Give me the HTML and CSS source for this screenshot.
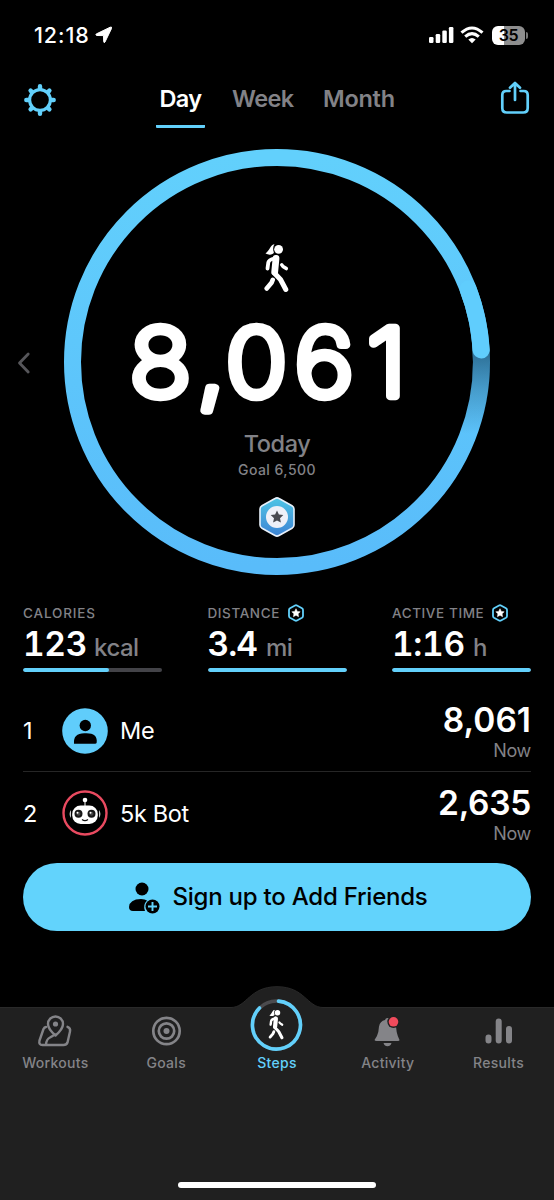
FILE: index.html
```html
<!DOCTYPE html>
<html lang="en">
<head>
<meta charset="utf-8">
<title>Steps</title>
<link rel="stylesheet" href="styles.css">
</head>
<body>
<svg class="defs" width="0" height="0">
  <defs>
    <symbol id="walker" viewBox="0 0 26 50">
      <g fill="none" stroke="currentColor" stroke-linecap="round" stroke-linejoin="round">
        <path d="M10.500 14.500Q5 15.500 4.300 18.500L3.500 24.500" stroke-width="3.800"/>
        <path d="M12 14.500 10.700 28" stroke-width="6.800"/>
        <path d="M10.300 29 16.500 35.500 21.800 45.500" stroke-width="5"/>
        <path d="M8.700 35.800 7.500 38.800 2.700 44.500" stroke-width="4.600"/>
        <path d="M17.700 20.800 19 22.500 22.300 24.600" stroke-width="3.500"/>
      </g>
      <circle cx="14.600" cy="5.300" r="4.400" fill="currentColor"/>
      <path d="M10.500.300C6.500.300 6.300 6 1.500 9.600 5 11.400 9 10.800 9.900 8.600 8.800 6 8.900 2.500 10.500.300Z" fill="currentColor"/>
    </symbol>
    <symbol id="badge" viewBox="0 0 18 18">
      <path d="M8 1.500Q9 1 10 1.500L15 4.300Q16 4.900 16 6V12Q16 13.100 15 13.700L10 16.500Q9 17 8 16.500L3 13.700Q2 13.100 2 12V6Q2 4.900 3 4.300Z" fill="none" stroke="#62d0fb" stroke-width="1.800"/>
      <path d="M9 4.700 10.300 7.400 13.200 7.800 11.100 9.800 11.600 12.700 9 11.300 6.400 12.700 6.900 9.800 4.800 7.800 7.700 7.400Z" fill="#fff" stroke="#fff" stroke-width=".5"/>
    </symbol>
  </defs>
</svg>

<div class="status">
  <span class="clock">12:18</span>
  <svg class="location" width="18" height="18" viewBox="0 0 18 18"><path d="M1.200 8 15.200 1.200Q17.200.500 16.500 2.500L10 16Q9.100 17.400 8.700 15.700L8.500 9.600 1.800 9.500Q.300 9.200 1.200 8Z" fill="#fff" stroke="#fff" stroke-linejoin="round"/></svg>
  <span class="spacer"></span>
  <svg width="26" height="18" viewBox="0 0 26 18" fill="#fff"><rect x="1" y="11" width="4.500" height="6" rx="1.200"/><rect x="7.700" y="8" width="4.500" height="9" rx="1.200"/><rect x="14.300" y="4.500" width="4.500" height="12.500" rx="1.200"/><rect x="20.900" y="1" width="4.500" height="16" rx="1.200"/></svg>
  <svg class="wifi" width="24" height="18" viewBox="0 0 24 18" fill="none" stroke="#fff" stroke-width="3.100"><path d="M1.500 6.700Q12-2.700 22.500 6.700"/><path d="M5.200 10.700Q12 4.700 18.800 10.700"/><path d="M12 17.200 8.300 13.500Q12 10.500 15.700 13.500Z" fill="#fff" stroke="none"/></svg>
  <span class="battery">35</span>
  <span class="nub"></span>
</div>

<header class="header">
  <svg class="gear" width="34" height="34" viewBox="-17 -17 34 34" stroke="#62d0fb" fill="none">
    <circle r="10.400" stroke-width="3.200"/>
    <path d="M0-12V-13.700M0 12V13.700M-12 0H-13.700M12 0H13.700M8.300-8.300 9.400-9.400M8.300 8.300 9.400 9.400M-8.300 8.300-9.400 9.400M-8.300-8.300-9.400-9.400" stroke-width="4.400" stroke-linecap="round"/>
  </svg>
  <nav class="tabs"><span class="tab active">Day</span><span class="tab week">Week</span><span class="tab month">Month</span></nav>
  <svg class="share" width="34" height="36" viewBox="0 0 34 36" fill="none" stroke="#62d0fb" stroke-width="2.700" stroke-linecap="round" stroke-linejoin="round"><path d="M11.500 11H8.300Q4.300 11 4.300 15V28Q4.300 32.500 8.800 32.500H25.200Q29.700 32.500 29.700 28V15Q29.700 11 25.700 11H22.500M17 20V3.500M12 7.700 17 3 22 7.700"/></svg>
</header>

<main>
  <section class="hero">
    <svg class="ring" width="426" height="426" viewBox="0 0 426 426">
      <defs>
        <linearGradient id="ringFill" x1="0" y1="0" x2="0" y2="1"><stop offset="0" stop-color="#62d0fc"/><stop offset="1" stop-color="#59bcfa"/></linearGradient>
        <linearGradient id="shade" gradientUnits="userSpaceOnUse" x1="0" y1="205" x2="0" y2="285"><stop offset="0" stop-color="#03233e" stop-opacity=".52"/><stop offset=".45" stop-color="#03233e" stop-opacity=".25"/><stop offset="1" stop-color="#03233e" stop-opacity="0"/></linearGradient>
      </defs>
      <circle cx="213" cy="213" r="204.500" fill="none" stroke="url(#ringFill)" stroke-width="17"/>
      <path d="M417.300 203A204.500 204.500 0 0 1 404 286" fill="none" stroke="url(#shade)" stroke-width="17.500"/>
      <path d="M404.070 140A204.500 204.500 0 0 1 417.150 201" fill="none" stroke="#60cdfd" stroke-width="17" stroke-linecap="round"/>
    </svg>
    <div class="hero-body">
      <svg class="hero-walker" width="26" height="50"><use href="#walker"/></svg>
      <svg class="count" width="300" height="110" viewBox="0 0 300 110"><text transform="scale(1.08 1)" x="2.500 65 91.500 155 222.500" y="84.500">8,061</text></svg>
      <div class="today">Today</div>
      <div class="goal">Goal 6,500</div>
      <svg class="medal" width="38" height="42" viewBox="0 0 38 42">
        <defs><linearGradient id="medalFill" x1="0" y1="0" x2="0" y2="1"><stop offset="0" stop-color="#4fc5e5"/><stop offset="1" stop-color="#3d83d4"/></linearGradient></defs>
        <path d="M17 2.500Q19 1.300 21 2.500L34 9.800Q36 11 36 13V29Q36 31 34 32.200L21 39.500Q19 40.700 17 39.500L4 32.200Q2 31 2 29V13Q2 11 4 9.800Z" fill="url(#medalFill)" stroke="#e8f0fa" stroke-width="1.600"/>
        <circle cx="19" cy="21" r="11" fill="#eef0f8"/>
        <path d="M19 14.500 20.900 18.600 25.300 19.100 22 22.200 22.900 26.600 19 24.400 15.100 26.600 16 22.200 12.700 19.100 17.100 18.600Z" fill="#484950"/>
      </svg>
    </div>
    <svg class="prev" width="16" height="26" viewBox="0 0 16 26" fill="none" stroke="#56565a" stroke-width="2.800" stroke-linecap="round" stroke-linejoin="round"><path d="M12.200 4 3.500 13 12.200 22"/></svg>
  </section>

  <section class="stats">
    <div class="stat">
      <div class="stat-label calories">CALORIES</div>
      <div class="stat-value"><b class="n1">123</b><span class="kcal">kcal</span></div>
      <div class="bar"><i class="fill partial"></i></div>
    </div>
    <div class="stat">
      <div class="stat-label">DISTANCE<svg width="18" height="18"><use href="#badge"/></svg></div>
      <div class="stat-value"><b class="n2">3.4</b><span>mi</span></div>
      <div class="bar"><i class="fill"></i></div>
    </div>
    <div class="stat">
      <div class="stat-label">ACTIVE TIME<svg width="18" height="18"><use href="#badge"/></svg></div>
      <div class="stat-value"><b class="n3">1:16</b><span>h</span></div>
      <div class="bar"><i class="fill"></i></div>
    </div>
  </section>

  <section class="board">
    <div class="row first">
      <span class="rank">1</span>
      <svg class="avatar" width="46" height="46" viewBox="0 0 46 46"><circle cx="23" cy="23" r="22.800" fill="#60cdfb"/><circle cx="23.300" cy="17.500" r="5.700"/><path d="M12 35.800Q11 24.800 23.300 25.300 35.700 24.800 34.700 34.500 34.500 35.800 33 35.800Z"/></svg>
      <span class="name">Me</span>
      <span class="score"><b>8,061</b><small>Now</small></span>
    </div>
    <div class="row">
      <span class="rank">2</span>
      <svg class="avatar" width="46" height="46" viewBox="0 0 46 46"><circle cx="23" cy="23" r="21.500" fill="none" stroke="#e94a60" stroke-width="2.400"/>
        <path d="M23 11V16" stroke="#fff" stroke-width="1"/><circle cx="23" cy="10" r="2.300" fill="#fff"/>
        <rect x="10.200" y="15.500" width="25.600" height="18.500" rx="8.500" fill="#fff"/>
        <path d="M8.800 20Q6.500 24 8.800 28ZM37.200 20Q39.500 24 37.200 28Z" fill="#fff"/>
        <circle cx="16.500" cy="23.800" r="4" fill="#171717"/><circle cx="29.500" cy="23.800" r="4" fill="#171717"/><circle cx="16.500" cy="23.800" r="2" fill="#444"/><circle cx="29.500" cy="23.800" r="2" fill="#444"/><circle cx="15.500" cy="22.700" r="1" fill="#fff"/><circle cx="28.500" cy="22.700" r="1" fill="#fff"/>
        <path d="M20 29.500Q23 31.800 26 29.500" fill="none" stroke="#111" stroke-width="1.200"/></svg>
      <span class="name">5k Bot</span>
      <span class="score second"><b>2,635</b><small>Now</small></span>
    </div>
  </section>

  <button class="signup">
    <svg width="33" height="34" viewBox="0 0 33 34"><circle cx="14" cy="8" r="6.500"/><path d="M1 26Q1.500 18.300 13 18 17 18 19 19.500 14.500 24 17 30H5Q1 30 1 26Z"/><circle cx="24.500" cy="25.500" r="7"/><path d="M24.500 21V30M20 25.500H29" stroke="#62d3fc" stroke-width="1.900"/></svg>
    <span>Sign up to Add Friends</span>
  </button>
</main>

<footer class="tabbar">
  <svg class="tabbar-bg" width="554" height="214" viewBox="0 0 554 214"><path d="M-2 21.500H231C247 21.500 249 .700 277 .700S307 21.500 323 21.500H556V216H-2Z" fill="#202020" stroke="#292929"/></svg>
  <nav class="items">
    <div class="item workouts">
      <svg width="36" height="36" viewBox="0 0 36 36" fill="none" stroke="#848488" stroke-width="2.400" stroke-linecap="round" stroke-linejoin="round"><path d="M9 13Q7.300 13.300 6.500 15L2.500 26.500Q1.500 31 5.500 31H26.500Q29.500 31 30.500 28.500L33 17.500Q33.800 14 30.500 12.800M9 30.500Q9.500 25 13 23.500L18 20.500"/><path d="M18.500 21.500Q11 15 11 10A7.500 7.500 0 0 1 26 10Q26 15 18.500 21.500Z"/><circle cx="18.500" cy="10" r="2.600" fill="#848488" stroke="none"/></svg>
      <span>Workouts</span>
    </div>
    <div class="item goals">
      <svg width="36" height="36" viewBox="0 0 36 36" fill="none" stroke="#848488" stroke-width="2.700"><circle cx="18.500" cy="17" r="13.200"/><circle cx="18.500" cy="17" r="7.700"/><circle cx="18.500" cy="17" r="3" fill="#848488" stroke="none"/></svg>
      <span>Goals</span>
    </div>
    <div class="item steps">
      <svg class="steps-icon" width="54" height="54" viewBox="0 0 54 54"><circle cx="26.500" cy="27" r="24" fill="none" stroke="#4b4b4e" stroke-width="3.400"/><path d="M28.500 3.100A24 24 0 1 1 9.500 10" fill="none" stroke="#62d0fb" stroke-width="3.600" stroke-linecap="round"/><svg x="17.500" y="11.500" width="18" height="31" color="#fff"><use href="#walker"/></svg></svg>
      <span>Steps</span>
    </div>
    <div class="item activity">
      <svg width="36" height="36" viewBox="0 0 36 36"><path d="M4.500 26Q7.500 22 8.300 18L9 12.500Q10 7 15 6 15.500 4 17.500 4T20 6Q25 7 26 12.500L26.700 18Q27.500 22 29.500 26 29.500 27 28 27H6.500Q5 27 4.500 26ZM13.500 29H21.500Q20.500 32.300 17.500 32.300T13.500 29Z" fill="#848488"/><circle cx="23.500" cy="7.800" r="6.200" fill="#202020"/><circle cx="23.500" cy="7.800" r="4.800" fill="#f04b5c"/></svg>
      <span>Activity</span>
    </div>
    <div class="item results">
      <svg width="36" height="36" viewBox="0 0 36 36" stroke="#848488" stroke-width="6" stroke-linecap="round"><path d="M7.500 23.500V26.500M17.700 7.500V26.500M28 15V26.500"/></svg>
      <span>Results</span>
    </div>
  </nav>
  <div class="home"></div>
</footer>
</body>
</html>
```

FILE: styles.css
```css
* { box-sizing: border-box; }
body { margin: 0; width: 554px; height: 1200px; overflow: hidden; background: #000; color: #fff; font-family: Inter, "Liberation Sans", sans-serif; display: flex; flex-direction: column; }
svg { display: block; flex: none; }
.defs { position: absolute; }
.status { height: 70px; padding: 0 26px 0 34px; display: flex; align-items: center; flex: none; }
.clock { font-size: 21.5px; font-weight: 500; line-height: 26px; width: 61px; letter-spacing: .9px; }
.spacer { flex: 1; }
.wifi { margin: 0 8px 0 6px; }
.battery { width: 33px; height: 19px; border-radius: 6px; background: linear-gradient(90deg, #fff 36%, #8e8e8e 36%); color: #000; font-size: 16px; line-height: 19px; font-weight: 600; text-align: center; letter-spacing: -.3px; }
.nub { width: 2px; height: 7px; margin-left: 1px; border-radius: 0 3px 3px 0; background: #777; }
.header { height: 79px; padding: 9px 23px 0; display: flex; align-items: flex-start; flex: none; }
.gear { margin: 4px 0 0 0; }
.tabs { display: flex; flex: 1; padding: 6px 0 0 99px; }
.tab { font-size: 23.5px; line-height: 28px; font-weight: 600; color: #828287; height: 43px; white-space: nowrap; letter-spacing: -.6px; }
.active { width: 49px; color: #fff; border-bottom: 3px solid #62d0fb; display: flex; justify-content: center; border-radius: 1px; }
.week { margin-left: 27px; width: 64px; }
.month { margin-left: 27px; letter-spacing: -.25px; }
.share { margin: 1px -.5px 0 0; }
main { height: 837px; padding: 0 23px; flex: none; }
.hero { display: grid; justify-items: center; height: 427px; }
.hero > * { grid-area: 1 / 1; }
.hero-body { display: flex; flex-direction: column; align-items: center; height: 426px; padding-top: 95px; }
.count { margin-top: 17px; overflow: visible; }
.count text { font-size: 94px; font-weight: 200; fill: #fff; stroke: #fff; stroke-width: 8.5px; stroke-linejoin: round; }
.today { font-size: 23.5px; line-height: 30px; font-weight: 500; color: #828287; letter-spacing: -.4px; margin-top: 8px; }
.goal { font-size: 14px; line-height: 20px; font-weight: 500; color: #828287; letter-spacing: .45px; margin-top: 1px; }
.medal { margin-top: 16px; }
.prev { justify-self: start; align-self: center; margin-left: -7.5px; }
.stats { display: grid; grid-template-columns: repeat(3, 139px); column-gap: 45.5px; padding-top: 27px; height: 108px; }
.stat { min-width: 0; }
.stat-label { height: 20px; display: flex; align-items: center; gap: 7px; color: #828287; font-size: 13.5px; font-weight: 500; letter-spacing: .6px; white-space: nowrap; }
.calories { letter-spacing: .85px; }
.stat-value { height: 45px; display: flex; align-items: baseline; padding-top: 1px; white-space: nowrap; }
.stat-value b { font-size: 33.5px; line-height: 40px; font-weight: 600; font-variant-numeric: tabular-nums; }
.stat-value span { font-size: 24px; color: #828287; font-weight: 500; letter-spacing: -.5px; }
.stat-value .n1 { letter-spacing: -.3px; width: 71px; }
.stat-value .n2 { letter-spacing: -.9px; width: 58.5px; }
.stat-value .n3 { letter-spacing: -.3px; width: 81px; }
.bar { height: 4px; border-radius: 2px; background: #434348; overflow: hidden; }
.fill { display: block; height: 4px; border-radius: 2px; background: #62d0fb; }
.partial { width: 86px; }
.row { height: 82px; display: flex; align-items: center; }
.first { height: 88px; border-bottom: 1px solid #262626; padding-top: 6px; }
.rank { width: 39px; font-size: 23.5px; }
.name { font-size: 23.5px; flex: 1; margin-left: 12px; letter-spacing: -.35px; }
.score { display: flex; flex-direction: column; align-items: flex-end; padding-top: 5px; }
.score b { font-size: 33.5px; line-height: 36px; font-weight: 600; }
.second b { letter-spacing: -.3px; }
.score small { font-size: 18px; line-height: 26px; color: #828287; letter-spacing: -.3px; }
.signup { margin-top: 9px; width: 508px; height: 68px; padding: 0; border: 0; border-radius: 34px; background: #62d3fc; color: #000; font: 500 24px/30px Inter, sans-serif; letter-spacing: -.23px; display: flex; align-items: center; justify-content: center; gap: 11px; white-space: nowrap; padding-left: 2px; }
.signup svg { position: relative; top: 1px; }
.tabbar { height: 214px; display: grid; flex: none; }
.tabbar > * { grid-area: 1 / 1; }
.items { display: flex; padding-left: 0; height: 104px; }
.item { flex: 1; display: flex; flex-direction: column; align-items: center; color: #848488; padding-top: 28px; }
.item span { font-size: 14px; line-height: 20px; font-weight: 500; letter-spacing: .3px; margin-top: 3px; }
.steps { padding-top: 12px; color: #62d0fb; }
.steps span { margin-top: 1px; }
.home { width: 198px; height: 6px; border-radius: 3px; background: #fff; align-self: end; justify-self: center; margin-bottom: 12px; }
```
